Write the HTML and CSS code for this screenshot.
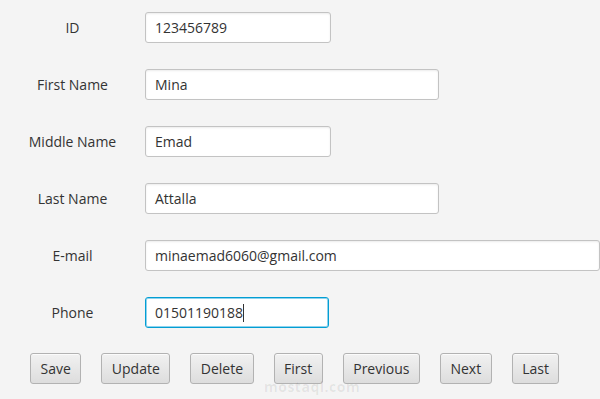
FILE: index.html
```html
<!DOCTYPE html>
<html lang="en">
<head>
    <meta charset="UTF-8">
    <title>Person Form</title>
    <link rel="stylesheet" href="styles.css">
</head>
<body>
    <div class="form">
        <label class="label">ID</label>
        <div class="field w-short">123456789</div>

        <label class="label">First Name</label>
        <div class="field w-mid">Mina</div>

        <label class="label">Middle Name</label>
        <div class="field w-short">Emad</div>

        <label class="label">Last Name</label>
        <div class="field w-mid">Attalla</div>

        <label class="label">E-mail</label>
        <div class="field w-long">minaemad6060@gmail.com</div>

        <label class="label">Phone</label>
        <div class="field w-phone focused">01501190188<span class="caret"></span></div>
    </div>

    <div class="actions">
        <button class="btn">Save</button>
        <button class="btn">Update</button>
        <button class="btn">Delete</button>
        <button class="btn">First</button>
        <button class="btn">Previous</button>
        <button class="btn">Next</button>
        <button class="btn">Last</button>
    </div>

    <div class="watermark">mostaql.com</div>
</body>
</html>
```

FILE: styles.css
```css
* {
    margin: 0;
    padding: 0;
    box-sizing: border-box;
}

body {
    font-family: "Open Sans", "Noto Sans", sans-serif;
    font-size: 14px;
    background: #f4f4f4;
    color: #333333;
    width: 600px;
    height: 399px;
    overflow: hidden;
    position: relative;
}

.form {
    display: grid;
    grid-template-columns: 145px auto;
    row-gap: 26px;
    padding-top: 12px;
}

.label {
    display: flex;
    align-items: center;
    justify-content: center;
    height: 31px;
}

.field {
    height: 31px;
    display: flex;
    align-items: center;
    padding: 0 9px;
    background: #ffffff;
    border: 1px solid #c3c3c3;
    border-radius: 3px;
    box-shadow: inset 0 1px 2px rgba(0, 0, 0, 0.08);
    white-space: nowrap;
}

.w-short { width: 186px; }
.w-mid { width: 294px; }
.w-long { width: 455px; }
.w-phone { width: 184px; }

.field.focused {
    border-color: #039ed3;
    box-shadow: inset 0 0 0 1px #8fd3ee;
}

.caret {
    display: inline-block;
    width: 1px;
    height: 18px;
    background: #333333;
}

.actions {
    display: flex;
    gap: 20px;
    margin-top: 25px;
    padding-left: 30px;
}

.btn {
    font-family: inherit;
    font-size: 14px;
    color: #333333;
    height: 31px;
    padding: 0 9.5px;
    border: 1px solid #b2b2b2;
    border-radius: 3px;
    background: linear-gradient(#f1f1f1, #dddddd);
    box-shadow: inset 0 1px 0 rgba(255, 255, 255, 0.7);
}

.watermark {
    position: absolute;
    left: 264px;
    top: 377px;
    font-size: 14px;
    font-weight: 700;
    letter-spacing: 0.5px;
    color: rgba(0, 0, 0, 0.07);
}
```
